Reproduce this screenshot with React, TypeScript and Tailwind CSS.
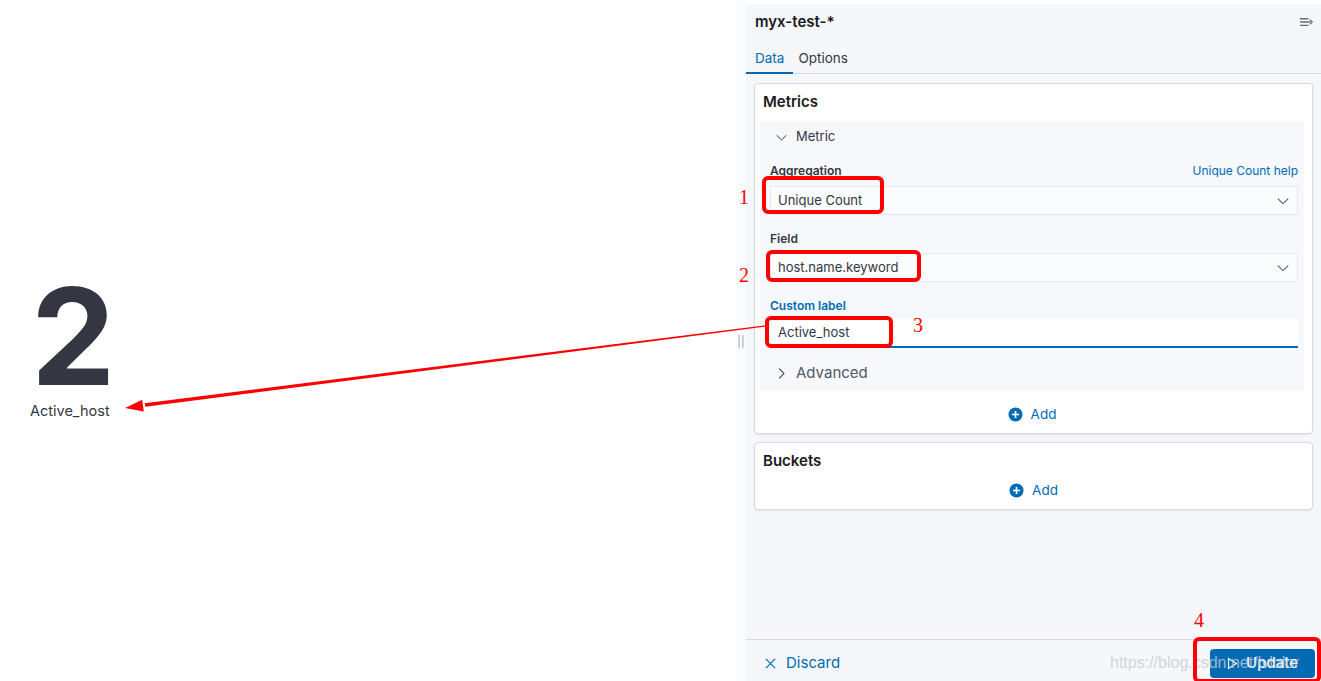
import React from 'react';

const ChevronDown = ({ className = '', size = 14 }: { className?: string; size?: number }) => (
    <svg className={className} width={size} height={size} viewBox="0 0 16 16" fill="none">
        <path d="M2 5.2 8 11l6-5.8" stroke="currentColor" strokeWidth="1.2" />
    </svg>
);

const ChevronRight = ({ className = '' }: { className?: string }) => (
    <svg className={className} width="13" height="13" viewBox="0 0 16 16" fill="none">
        <path d="M5.2 2 11 8l-5.8 6" stroke="currentColor" strokeWidth="1.3" />
    </svg>
);

const PlusCircle = () => (
    <svg width="15" height="15" viewBox="0 0 16 16">
        <circle cx="8" cy="8" r="7.5" fill="#006bb4" />
        <path d="M8 4.2v7.6M4.2 8h7.6" stroke="#fff" strokeWidth="1.8" />
    </svg>
);

const AddRow = () => (
    <div className="flex items-center justify-center gap-[8px] h-[24px]">
        <PlusCircle />
        <span className="text-[13.5px] text-[#006bb4]">Add</span>
    </div>
);

// select / input look
const SelectBox = ({ value }: { value: string }) => (
    <div className="h-[29px] bg-[#fbfcfd] border border-[#e3e8f0] flex items-center justify-between pl-[7px] pr-[7px]">
        <span className="text-[13px] text-[#343741]">{value}</span>
        <ChevronDown className="text-[#535966]" />
    </div>
);

const FieldLabel = ({ children, blue }: { children: React.ReactNode; blue?: boolean }) => (
    <div className={`h-[16px] flex items-center text-[12px] font-semibold ${blue ? 'text-[#006bb4]' : 'text-[#343741]'}`}>
        {children}
    </div>
);

export default function App() {
    return (
        <div className="relative w-[1321px] h-[681px] overflow-hidden bg-white flex font-['Inter',sans-serif]">
            {/* visualization */}
            <div className="w-[736px] pt-[273px] pl-[30px]">
                <div className="text-[134px] leading-[126px] font-bold text-[#343741] pl-[1px]">2</div>
                <div className="mt-[2px] h-[20px] flex items-center text-[14.5px] text-[#343741]">Active_host</div>
            </div>

            {/* resize handle */}
            <div className="w-[10px] bg-[#fafbfd] flex items-center justify-center">
                <span className="text-[11px] text-[#98a2b3] mt-[4px]">||</span>
            </div>

            {/* side panel */}
            <div className="flex-1 mt-[4px] bg-[#f5f7fa] flex flex-col">
                <div className="flex items-center justify-between pt-[6px] pl-[9px] pr-[7px] h-[30px]">
                    <span className="text-[15px] font-semibold text-[#1a1c21]">myx-test-*</span>
                    <svg width="15" height="12" viewBox="0 0 16 12" fill="none">
                        <path d="M1 2.5h9M1 6h11M1 9.5h9" stroke="#69707d" strokeWidth="1.4" />
                        <path d="M11.5 3.5 14 6l-2.5 2.5" stroke="#69707d" strokeWidth="1.4" />
                    </svg>
                </div>

                <div className="mt-[10px] h-[30px] flex border-b border-[#d3dae6]">
                    <div className="px-[9px] flex items-center text-[13.5px] text-[#006bb4] border-b-2 border-[#006bb4] mb-[-1px]">Data</div>
                    <div className="px-[5px] flex items-center text-[13.5px] text-[#343741]">Options</div>
                </div>

                <div className="px-[8px] pt-[9px] flex flex-col gap-[8px]">
                    {/* metrics card */}
                    <div className="bg-white border border-[#d3dae6] rounded-[4px] shadow-[0_1px_2px_rgba(0,0,0,0.08)] pt-[8px] pl-[5px] pr-[8px] pb-[7px]">
                        <div className="pl-[3px] h-[20px] flex items-center text-[15px] font-semibold text-[#1a1c21]">Metrics</div>

                        <div className="mt-[9px] bg-[#f7f8fb] rounded-[3px] pl-[10px] pr-[6px] pb-[2px]">
                            <div className="h-[32px] flex items-center gap-[8px] pl-[5px]">
                                <ChevronDown className="text-[#343741]" size={13} />
                                <span className="text-[13px] text-[#343741]">Metric</span>
                            </div>

                            <div className="mt-[9px] flex items-center justify-between">
                                <FieldLabel>Aggregation</FieldLabel>
                                <span className="text-[12px] text-[#006bb4]">Unique Count help</span>
                            </div>
                            <div className="mt-[6px]"><SelectBox value="Unique Count" /></div>

                            <div className="mt-[16px]"><FieldLabel>Field</FieldLabel></div>
                            <div className="mt-[6px]"><SelectBox value="host.name.keyword" /></div>

                            <div className="mt-[16px]"><FieldLabel blue>Custom label</FieldLabel></div>
                            <div className="mt-[5px] h-[29px] bg-white border-b-2 border-[#006bb4] flex items-center pl-[8px]">
                                <span className="text-[13px] text-[#343741]">Active_host</span>
                            </div>

                            <div className="mt-[9px] h-[32px] flex items-center gap-[8px] pl-[5px]">
                                <ChevronRight className="text-[#343741]" />
                                <span className="text-[15px] text-[#535966]">Advanced</span>
                            </div>
                        </div>

                        <div className="mt-[11px]"><AddRow /></div>
                    </div>

                    {/* buckets card */}
                    <div className="bg-white border border-[#d3dae6] rounded-[4px] shadow-[0_1px_2px_rgba(0,0,0,0.08)] pt-[8px] px-[8px] pb-[7px]">
                        <div className="h-[20px] flex items-center text-[15px] font-semibold text-[#1a1c21]">Buckets</div>
                        <div className="mt-[7px]"><AddRow /></div>
                    </div>
                </div>

                <div className="mt-auto h-[42px] border-t border-[#d3dae6] flex items-center justify-between pl-[19px] pr-[6px] pt-[5px]">
                    <div className="flex items-center gap-[10px] text-[#006bb4]">
                        <svg width="11" height="11" viewBox="0 0 12 12" fill="none">
                            <path d="M1 1l10 10M11 1 1 11" stroke="currentColor" strokeWidth="1.3" />
                        </svg>
                        <span className="text-[15px]">Discard</span>
                    </div>
                    <div className="w-[105px] h-[29px] rounded-[4px] bg-[#006bb4] flex items-center justify-center gap-[8px] text-white">
                        <svg width="11" height="13" viewBox="0 0 11 13" fill="none">
                            <path d="M1.5 1.5v10l8-5z" stroke="#fff" strokeWidth="1.2" />
                        </svg>
                        <span className="text-[15px] font-medium">Update</span>
                    </div>
                </div>
            </div>

            {/* watermark */}
            <div className="absolute left-[1110px] top-[651px] text-[16px] text-[#c8ccd2]/80 font-['Liberation_Sans',sans-serif] pointer-events-none">
                https://blog.csdn.net/lvlolor
            </div>

            {/* red annotations */}
            <div className="absolute left-[762px] top-[176px] w-[122px] h-[38px] border-[4px] border-[#ff0000] rounded-[6px]" />
            <div className="absolute left-[766px] top-[250px] w-[155px] h-[32px] border-[4px] border-[#ff0000] rounded-[6px]" />
            <div className="absolute left-[765px] top-[316px] w-[128px] h-[32px] border-[4px] border-[#ff0000] rounded-[6px]" />
            <div className="absolute left-[1193px] top-[637px] w-[128px] h-[46px] border-[4px] border-[#ff0000] rounded-[6px]" />

            <span className="absolute left-[739px] top-[187px] text-[20px] leading-none text-[#ff0000] font-['Liberation_Serif',serif]">1</span>
            <span className="absolute left-[739px] top-[265px] text-[20px] leading-none text-[#ff0000] font-['Liberation_Serif',serif]">2</span>
            <span className="absolute left-[913px] top-[315px] text-[20px] leading-none text-[#ff0000] font-['Liberation_Serif',serif]">3</span>
            <span className="absolute left-[1194px] top-[610px] text-[20px] leading-none text-[#ff0000] font-['Liberation_Serif',serif]">4</span>

            <svg className="absolute left-0 top-0 pointer-events-none" width="1321" height="681">
                <polygon points="766,325.2 766,326.6 145.3,406.8 144.7,403.2" fill="#ff0000" />
                <polygon points="125,408 142.2,399.7 143.8,411.6" fill="#ff0000" />
            </svg>
        </div>
    );
}
